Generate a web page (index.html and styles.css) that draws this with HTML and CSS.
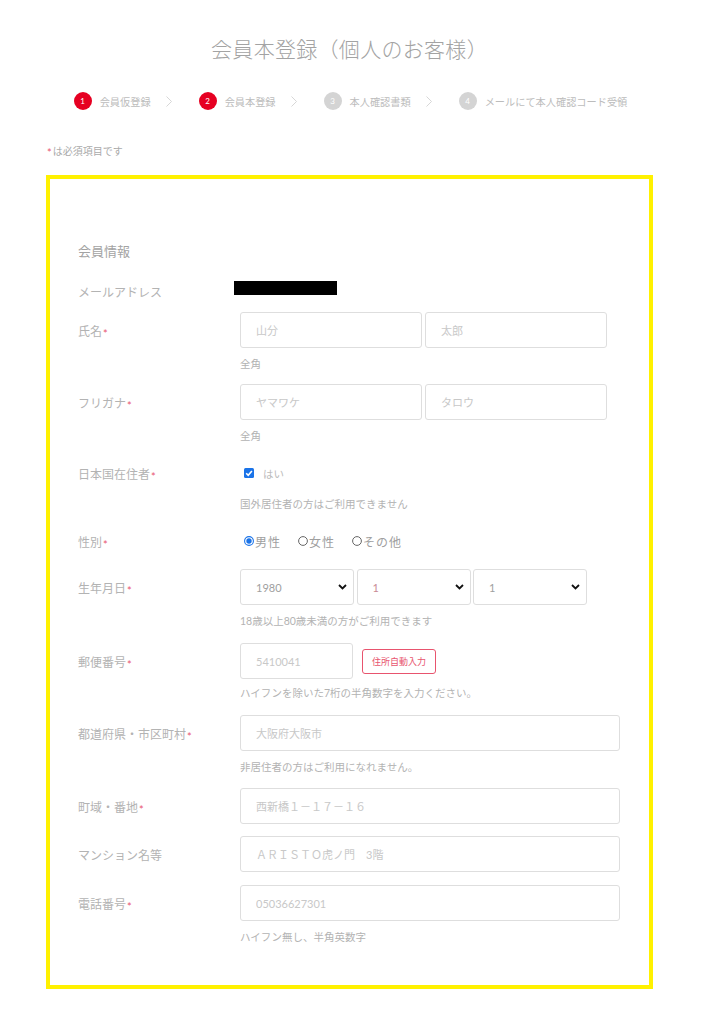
FILE: index.html
```html
<!DOCTYPE html>
<html lang="ja">
<head>
<meta charset="utf-8">
<title>会員本登録（個人のお客様）</title>
<link rel="stylesheet" href="styles.css">
</head>
<body>
<div class="page">
  <h1 class="title">会員本登録（個人のお客様）</h1>

  <ol class="steps">
    <li class="step"><span class="num num-on">1</span><span class="step-text">会員仮登録</span>
      <svg class="chev" width="6" height="11" viewBox="0 0 6 11"><polyline points="0.5,0.5 5.5,5.5 0.5,10.5" fill="none" stroke="#d3d3d3" stroke-width="0.9"/></svg></li>
    <li class="step"><span class="num num-on">2</span><span class="step-text">会員本登録</span>
      <svg class="chev" width="6" height="11" viewBox="0 0 6 11"><polyline points="0.5,0.5 5.5,5.5 0.5,10.5" fill="none" stroke="#d3d3d3" stroke-width="0.9"/></svg></li>
    <li class="step"><span class="num">3</span><span class="step-text">本人確認書類</span>
      <svg class="chev" width="6" height="11" viewBox="0 0 6 11"><polyline points="0.5,0.5 5.5,5.5 0.5,10.5" fill="none" stroke="#d3d3d3" stroke-width="0.9"/></svg></li>
    <li class="step"><span class="num">4</span><span class="step-text">メールにて本人確認コード受領</span></li>
  </ol>

  <p class="required-note"><span class="req">*</span>は必須項目です</p>

  <form class="box">
    <h2 class="section-title">会員情報</h2>

    <div class="row row-email">
      <span class="label">メールアドレス</span>
      <div class="control"><span class="redacted"></span></div>
    </div>

    <div class="row row-13">
      <span class="label">氏名<span class="req">*</span></span>
      <div class="control pair">
        <input class="field" type="text" placeholder="山分">
        <input class="field" type="text" placeholder="太郎">
      </div>
      <p class="note">全角</p>
    </div>

    <div class="row row-12">
      <span class="label">フリガナ<span class="req">*</span></span>
      <div class="control pair">
        <input class="field" type="text" placeholder="ヤマワケ">
        <input class="field" type="text" placeholder="タロウ">
      </div>
      <p class="note">全角</p>
    </div>

    <div class="row row-19 row-wide-note">
      <span class="label">日本国在住者<span class="req">*</span></span>
      <div class="control line">
        <svg class="check" width="10" height="10" viewBox="0 0 10 10"><rect width="10" height="10" rx="1.5" fill="#1a73e8"/><polyline points="2.2,5.2 4.2,7.2 7.9,2.9" fill="none" stroke="#fff" stroke-width="1.6"/></svg>
        <span class="check-text">はい</span>
      </div>
      <p class="note">国外居住者の方はご利用できません</p>
    </div>

    <div class="row row-19">
      <span class="label">性別<span class="req">*</span></span>
      <div class="control line radios">
        <span class="radio"><svg width="10" height="10" viewBox="0 0 10 10"><circle cx="5" cy="5" r="4.4" fill="#fff" stroke="#1a73e8" stroke-width="1.1"/><circle cx="5" cy="5" r="2.7" fill="#1a73e8"/></svg>男性</span>
        <span class="radio"><svg width="10" height="10" viewBox="0 0 10 10"><circle cx="5" cy="5" r="4.4" fill="#fff" stroke="#666" stroke-width="1"/></svg>女性</span>
        <span class="radio"><svg width="10" height="10" viewBox="0 0 10 10"><circle cx="5" cy="5" r="4.4" fill="#fff" stroke="#666" stroke-width="1"/></svg>その他</span>
      </div>
    </div>

    <div class="row row-18">
      <span class="label">生年月日<span class="req">*</span></span>
      <div class="control triple">
        <div class="select"><span>1980</span><svg width="9" height="6" viewBox="0 0 9 6"><polyline points="1,1 4.5,4.5 8,1" fill="none" stroke="#111" stroke-width="1.8"/></svg></div>
        <div class="select"><span class="pink">1</span><svg width="9" height="6" viewBox="0 0 9 6"><polyline points="1,1 4.5,4.5 8,1" fill="none" stroke="#111" stroke-width="1.8"/></svg></div>
        <div class="select"><span>1</span><svg width="9" height="6" viewBox="0 0 9 6"><polyline points="1,1 4.5,4.5 8,1" fill="none" stroke="#111" stroke-width="1.8"/></svg></div>
      </div>
      <p class="note">18歳以上80歳未満の方がご利用できます</p>
    </div>

    <div class="row row-14 row-tight-note">
      <span class="label">郵便番号<span class="req">*</span></span>
      <div class="control postal">
        <input class="field field-short" type="text" placeholder="5410041">
        <button class="auto-btn" type="button">住所自動入力</button>
      </div>
      <p class="note">ハイフンを除いた7桁の半角数字を入力ください。</p>
    </div>

    <div class="row row-14">
      <span class="label">都道府県・市区町村<span class="req">*</span></span>
      <div class="control"><input class="field field-full" type="text" placeholder="大阪府大阪市"></div>
      <p class="note">非居住者の方はご利用になれません。</p>
    </div>

    <div class="row row-13">
      <span class="label">町域・番地<span class="req">*</span></span>
      <div class="control"><input class="field field-full" type="text" placeholder="西新橋１－１７－１６"></div>
    </div>

    <div class="row row-12">
      <span class="label">マンション名等</span>
      <div class="control"><input class="field field-full" type="text" placeholder="ＡＲＩＳＴＯ虎ノ門　3階"></div>
    </div>

    <div class="row row-13">
      <span class="label">電話番号<span class="req">*</span></span>
      <div class="control"><input class="field field-full" type="text" placeholder="05036627301"></div>
      <p class="note">ハイフン無し、半角英数字</p>
    </div>
  </form>
</div>
</body>
</html>
```

FILE: styles.css
```css
* { box-sizing: border-box; }

html, body {
  margin: 0;
  padding: 0;
  background: #fff;
}

body {
  font-family: "Lato", "Noto Sans CJK JP", sans-serif;
  color: #b0b0b0;
}

.page {
  width: 607px;
  margin-left: 46px;
  padding-top: 34px;
  padding-bottom: 35px;
}

.title {
  margin: 0;
  text-align: center;
  font-size: 21px;
  line-height: 30px;
  font-weight: 300;
  color: #a3a3a3;
  letter-spacing: 0.3px;
}

.steps {
  list-style: none;
  margin: 28px 0 0;
  padding: 0 0 0 2px;
  display: flex;
  justify-content: center;
  align-items: center;
  height: 18px;
  font-size: 10.2px;
  color: #bcbcbc;
}

.step {
  display: flex;
  align-items: center;
}

.num {
  width: 18px;
  height: 18px;
  border-radius: 50%;
  background: #d4d4d4;
  color: #fff;
  font-size: 8px;
  line-height: 18px;
  text-align: center;
  flex: none;
}

.num-on { background: #e60022; }

.step-text {
  margin-left: 8px;
  white-space: nowrap;
}

.chev {
  margin-left: 15px;
  margin-right: 27px;
  display: block;
}

.required-note {
  margin: 34px 0 0 1px;
  font-size: 10px;
  line-height: 14px;
  color: #aaa;
}

.req {
  color: #e8546e;
  font-size: 11px;
  position: relative;
  top: 2px;
  margin-left: 1px;
}

.required-note .req { margin-left: 0; margin-right: 1px; }

.box {
  margin-top: 17px;
  border: 4px solid #fff100;
  padding: 62px 28px 40px;
}

.section-title {
  margin: 0;
  font-size: 13px;
  line-height: 20px;
  font-weight: 400;
  color: #a3a3a3;
}

.row {
  display: grid;
  grid-template-columns: 162px auto;
  row-gap: 8px;
  align-items: start;
}

.row-email { margin-top: 18px; }
.row-12 { margin-top: 12px; }
.row-13 { margin-top: 13px; }
.row-14 { margin-top: 14px; }
.row-18 { margin-top: 18px; }
.row-19 { margin-top: 19px; }
.row-wide-note { row-gap: 13px; }
.row-tight-note { row-gap: 6px; }

.label {
  grid-row: 1;
  grid-column: 1;
  align-self: center;
  margin-top: 2px;
  margin-bottom: -2px;
  font-size: 12px;
  line-height: 18px;
  color: #b3b3b3;
  white-space: nowrap;
}

.row-email .label {
  margin-top: 4px;
  margin-bottom: -4px;
}

.control {
  grid-row: 1;
  grid-column: 2;
}

.note {
  grid-row: 2;
  grid-column: 2;
  margin: 0;
  font-size: 10.5px;
  line-height: 16px;
  color: #b3b3b3;
}

.row-email .control {
  height: 20px;
  display: flex;
  align-items: center;
}

.redacted {
  display: block;
  width: 103px;
  height: 14px;
  background: #000;
  margin-left: -6px;
  margin-top: -2px;
}

.field {
  display: block;
  height: 36px;
  border: 1px solid #dedede;
  border-radius: 3px;
  padding: 0 15px;
  font-family: "Lato", "Noto Sans CJK JP", sans-serif;
  font-size: 11px;
  color: #888;
  background: #fff;
  outline: none;
}

.field::placeholder { color: #c8c8c8; }

.pair {
  display: grid;
  grid-template-columns: 182px 182px;
  column-gap: 3px;
}

.pair .field { width: 182px; }

.field-full { width: 380px; }
.field-short { width: 113px; }

.line {
  height: 20px;
  display: flex;
  align-items: center;
}

.check { margin-left: 4px; display: block; }

.check-text {
  margin-left: 9px;
  font-size: 10.5px;
  color: #bbb;
}

.radios { gap: 17px; }

.radio {
  display: flex;
  align-items: center;
  gap: 1px;
  font-size: 12px;
  color: #a0a0a0;
  letter-spacing: 1px;
}

.radio:first-child { margin-left: 4px; }

.triple {
  display: grid;
  grid-template-columns: 114px 114px 114px;
  column-gap: 2.5px;
}

.select {
  height: 36px;
  border: 1px solid #dedede;
  border-radius: 3px;
  padding: 0 6px 0 15px;
  display: flex;
  align-items: center;
  justify-content: space-between;
  font-size: 11px;
  color: #a0a0a0;
}

.select svg { display: block; }

.pink { color: #c98a95; }

.postal {
  display: flex;
  align-items: center;
}

.auto-btn {
  margin-left: 9px;
  width: 74px;
  height: 25px;
  border: 1px solid #e8546e;
  border-radius: 3px;
  background: #fff;
  color: #e8546e;
  font-family: "Lato", "Noto Sans CJK JP", sans-serif;
  font-size: 9px;
  padding: 0;
}
```
